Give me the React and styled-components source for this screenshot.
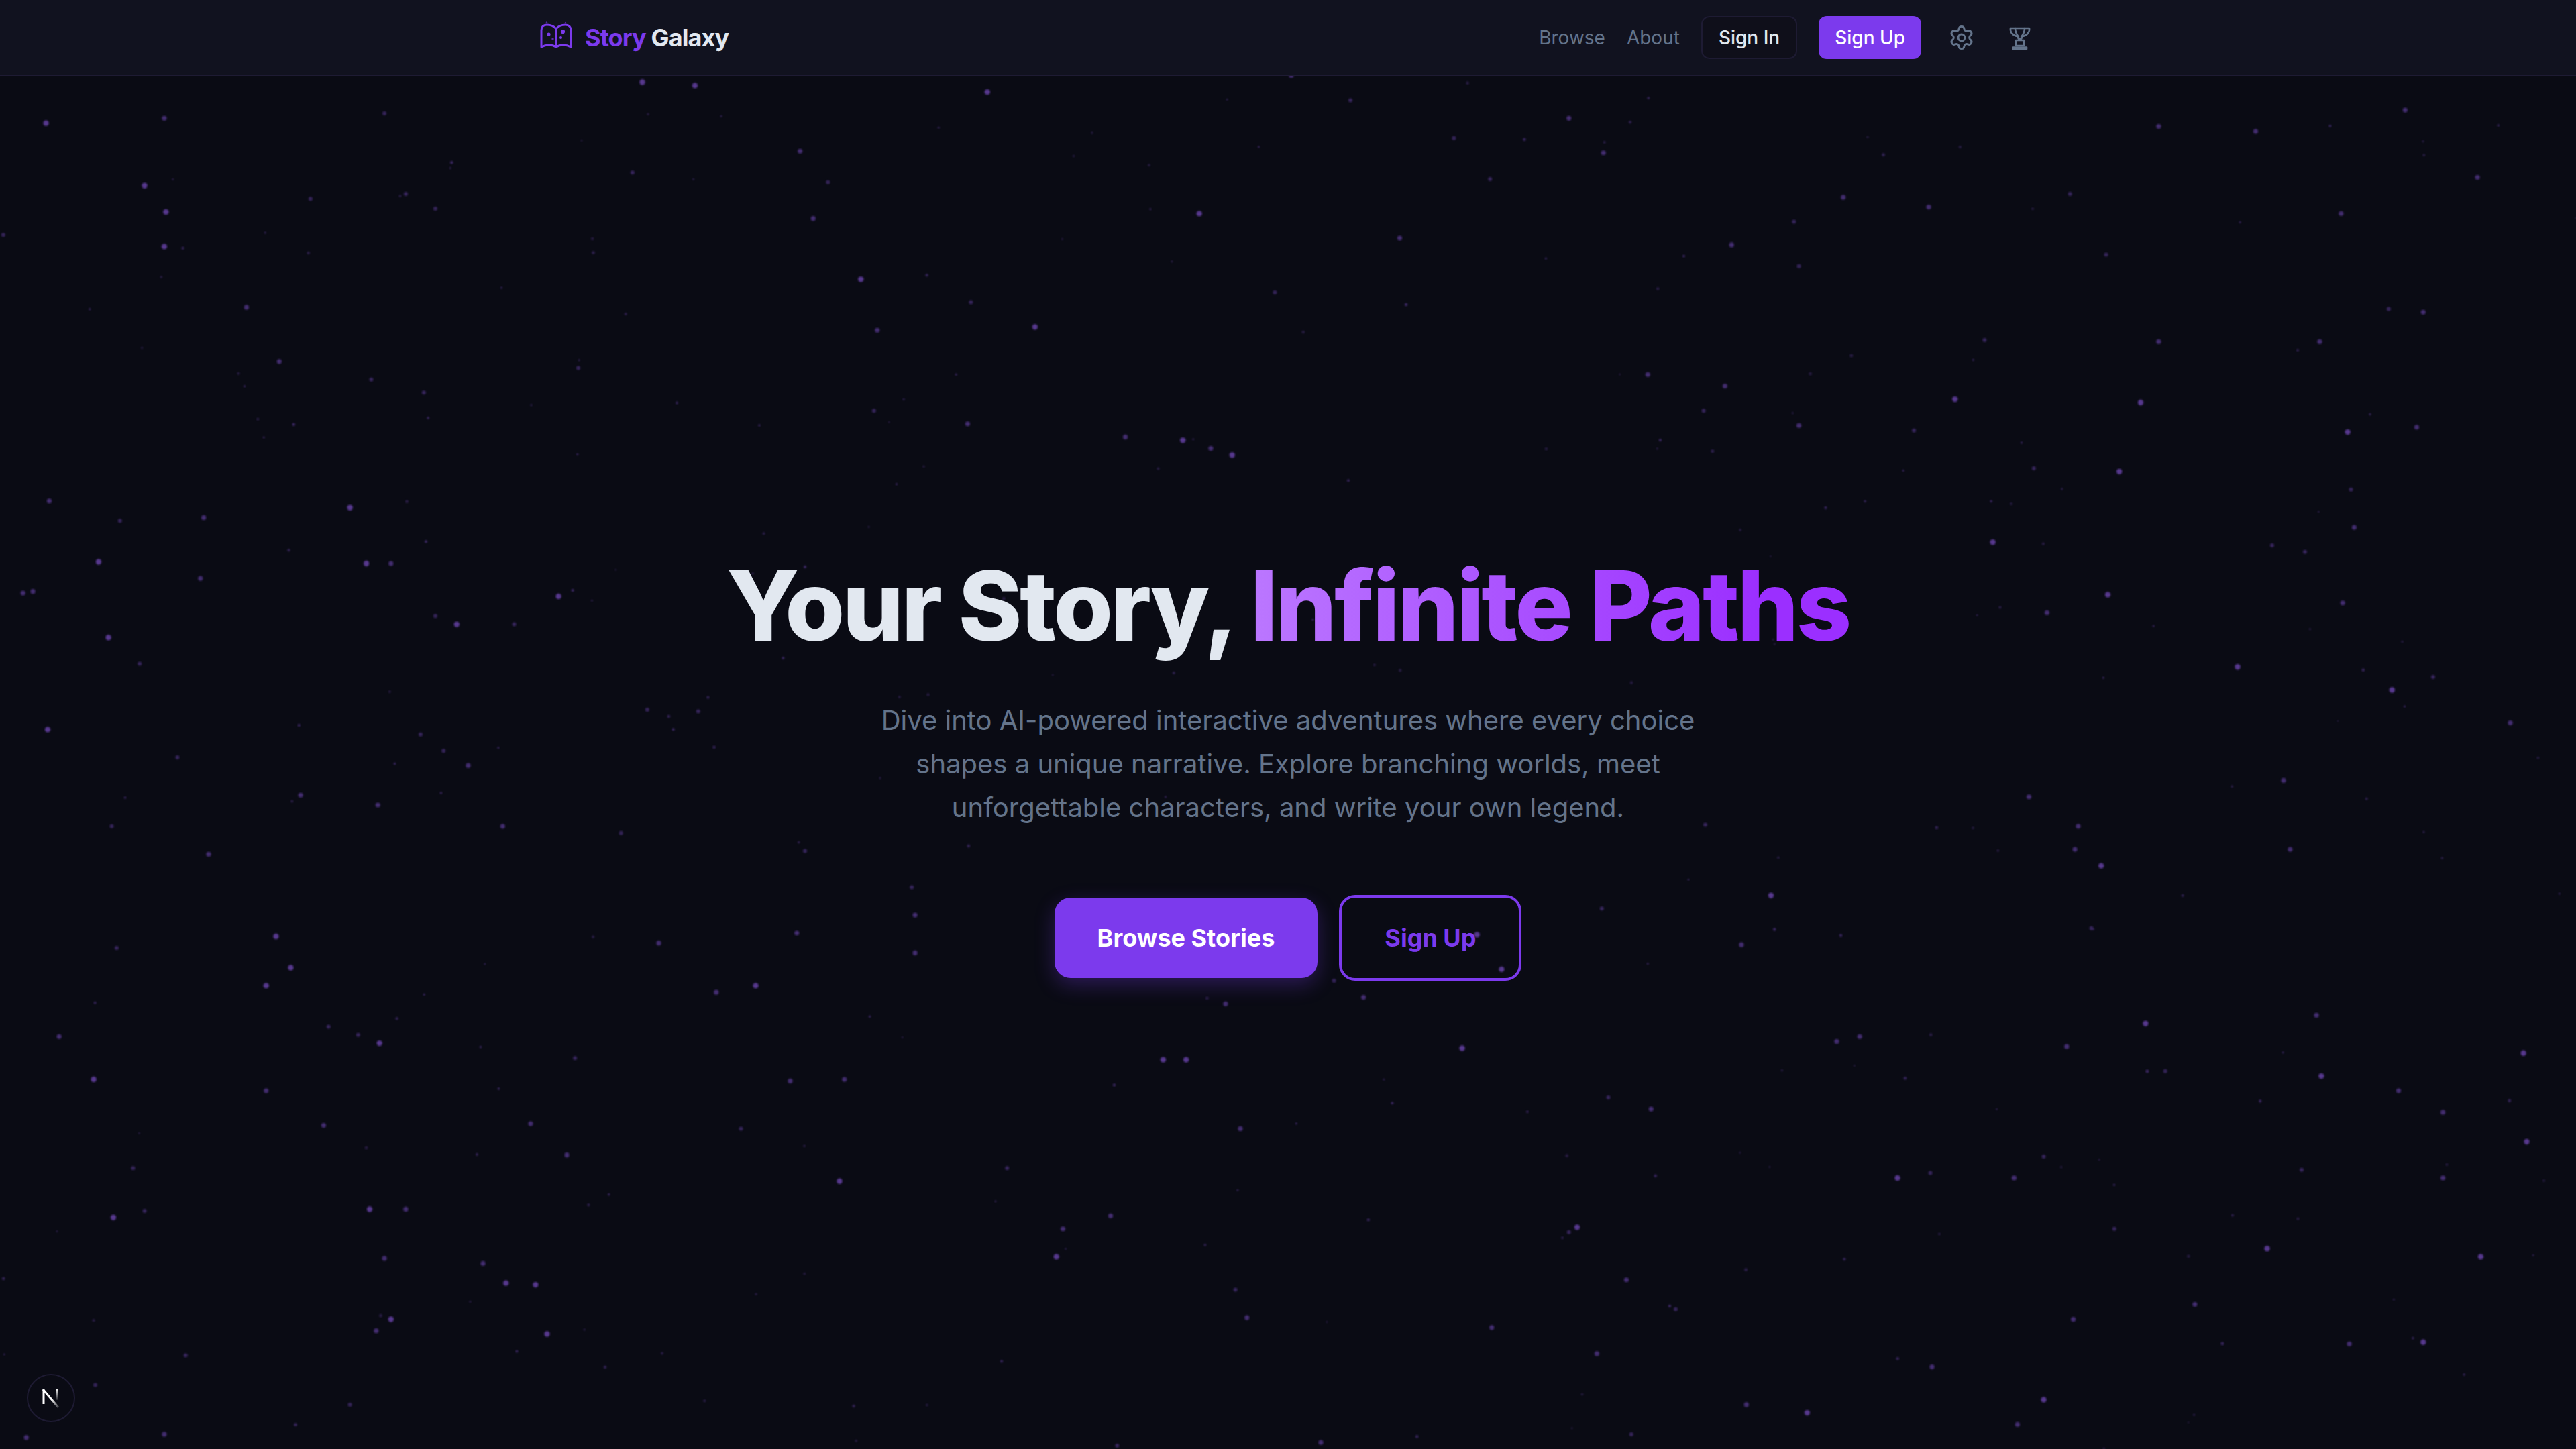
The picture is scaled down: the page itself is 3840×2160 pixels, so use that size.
import React from "react";
import styled, { createGlobalStyle } from "styled-components";
import { Settings } from "lucide-react";

const GlobalStyle = createGlobalStyle`
  html, body {
    margin: 0;
    padding: 0;
    background: #0a0b14;
  }
  * {
    box-sizing: border-box;
  }
`;

// star spots, read off the 1568 wide reference
const STAR_SPOTS = [
  [391,50],[423,52],[601,56],[786,46],[822,61],[885,84],[28,75],[234,69],[100,72],[487,92],[504,111],[495,133],[385,105],[88,113],[101,129],[189,121],[265,127],[2,143],[100,150],[247,118],[524,170],[591,184],[630,199],[150,187],[534,201],[352,224],[170,220],[226,231],[258,239],[1003,228],[1050,235],[1095,259],[1037,250],[1208,207],[1314,208],[1412,208],[1471,260],[1429,263],[1290,287],[1238,285],[1190,243],[1165,262],[1303,245],[1373,80],[1314,77],[1464,67],[1508,108],[1260,118],[1174,126],[1122,120],[1095,162],[1054,149],[976,93],[955,72],[852,145],[907,109],[776,178],[730,130],[1475,190],[1454,188],[1425,130],[1282,155],[1092,135],[685,266],[720,268],[737,273],[750,277],[589,258],[532,250],[30,305],[73,317],[213,309],[124,315],[60,342],[14,361],[20,360],[122,352],[223,343],[238,343],[340,363],[313,380],[265,375],[278,380],[66,388],[29,444],[85,404],[394,432],[425,433],[256,447],[270,457],[285,466],[108,461],[183,484],[230,490],[306,503],[378,507],[127,520],[68,503],[1213,330],[1431,298],[1433,321],[1403,336],[1283,362],[1426,367],[1383,332],[1246,373],[1362,406],[1456,420],[1481,412],[1528,440],[1390,475],[1265,503],[1263,517],[1279,527],[1394,517],[1273,565],[1235,485],[1078,545],[975,553],[1038,502],[1060,575],[168,570],[71,577],[177,589],[162,600],[200,625],[218,630],[231,635],[36,631],[57,657],[162,664],[197,685],[81,711],[69,741],[88,737],[225,736],[247,736],[234,766],[294,769],[308,781],[326,782],[333,812],[229,810],[238,803],[213,855],[113,825],[58,843],[100,873],[16,875],[350,644],[323,684],[345,703],[451,687],[481,658],[514,657],[511,719],[613,711],[755,687],[708,645],[722,645],[647,748],[643,765],[676,740],[752,785],[759,802],[908,808],[960,747],[955,750],[990,779],[1020,797],[972,824],[1155,717],[1244,704],[1226,717],[1175,714],[1118,634],[1132,631],[1258,637],[1306,623],[1318,652],[1410,618],[1413,655],[1460,664],[1487,677],[1536,641],[1487,717],[1538,695],[1401,712],[1380,760],[1287,748],[1262,803],[1336,794],[1430,818],[1475,817],[1510,765],[1244,852],[1228,867],[1176,832],[1100,860],[1063,855],[993,873],[804,878],[680,880],[557,557],[485,568],[401,574],[557,580],[555,540],[460,600],[436,604],[715,555],[746,611],[830,607],[890,638],[979,668],[1005,675],[490,518],[812,597],[899,569],[914,590],
];

const SCALE = 3840 / 1568;

// small seeded generator so the faint dust stays put between runs
function makeDust(count) {
  let seed = 4711;
  const next = () => {
    seed = (seed * 16807) % 2147483647;
    return seed / 2147483647;
  };
  const dust = [];
  for (let i = 0; i < count; i++) {
    dust.push({ x: next() * 3840, y: 116 + next() * 2044, r: 1.2 + next() * 1.3, o: 0.2 + next() * 0.2 });
  }
  return dust;
}

const BIG_STARS = STAR_SPOTS.map(([x, y], i) => {
  const h = (x * 7 + y * 13 + i) % 10;
  return {
    x: x * SCALE,
    y: y * SCALE,
    r: h < 3 ? 3 : h < 7 ? 3.6 : 4.2,
    o: h < 3 ? 0.35 : h < 7 ? 0.45 : 0.6,
  };
});
const STARS = [...BIG_STARS, ...makeDust(240)];

function StarField() {
  return (
    <StarSvg viewBox="0 0 3840 2160" aria-hidden="true">
      {STARS.map((star, i) => (
        <circle key={i} cx={star.x} cy={star.y} r={star.r} fill="#8a56e0" opacity={star.o} />
      ))}
    </StarSvg>
  );
}

function LogoIcon() {
  return (
    <LogoSvg width="48" height="44" viewBox="0 0 48 44" fill="none" stroke="#7c3aed" strokeWidth="3" strokeLinejoin="round" strokeLinecap="round">
      <path d="M2 38V13C2 8 5 5 10 5C16 5 21 7 24 11C27 7 32 5 38 5C43 5 46 8 46 13V38C39 34 30 34 24 38C18 34 9 34 2 38Z" />
      <path d="M24 11V38" />
      <g fill="#7c3aed" stroke="none">
        <circle cx="13" cy="19" r="2.6" />
        <circle cx="34" cy="15" r="3.1" />
        <circle cx="19" cy="26" r="1.7" fillOpacity="0.7" />
        <circle cx="31" cy="24" r="2" />
        <circle cx="10" cy="1.5" r="1.2" fillOpacity="0.6" />
        <circle cx="38" cy="2" r="1.2" fillOpacity="0.6" />
      </g>
    </LogoSvg>
  );
}

function TrophyIcon() {
  return (
    <svg width="36" height="36" viewBox="0 0 36 36" fill="none" stroke="currentColor" strokeWidth="2.6" strokeLinejoin="round" strokeLinecap="round">
      <path d="M4 4H32C33 10 28 15 22 16L20 20H16L14 16C8 15 3 10 4 4Z" />
      <path d="M11 4C11 9 13 13 16 17" />
      <path d="M25 4C25 9 23 13 20 17" />
      <path d="M12 22H24V30H12Z" />
      <path d="M8 32.5H28V35H8Z" />
    </svg>
  );
}

function NextMark() {
  return (
    <svg width="30" height="32" viewBox="0 0 30 32" fill="none">
      <defs>
        <linearGradient id="nextFadeA" x1="0" y1="0" x2="1" y2="1">
          <stop offset="0.55" stopColor="#fff" />
          <stop offset="1" stopColor="#fff" stopOpacity="0.2" />
        </linearGradient>
        <linearGradient id="nextFadeB" x1="0" y1="0" x2="0" y2="1">
          <stop offset="0" stopColor="#fff" />
          <stop offset="1" stopColor="#fff" stopOpacity="0.1" />
        </linearGradient>
      </defs>
      <path d="M4 3.5V25" stroke="#fff" strokeWidth="3" />
      <path d="M3 3L26 30" stroke="url(#nextFadeA)" strokeWidth="3" />
      <rect x="23" y="2" width="3" height="17" fill="url(#nextFadeB)" />
    </svg>
  );
}

export default function App() {
  return (
    <Page>
      <GlobalStyle />
      <StarField />
      <Header>
        <HeaderInner>
          <Logo>
            <LogoIcon />
            <LogoText>
              <span>Story</span> Galaxy
            </LogoText>
          </Logo>
          <Nav>
            <NavLink>Browse</NavLink>
            <NavLink>About</NavLink>
            <SignIn>Sign In</SignIn>
            <SignUpSmall>Sign Up</SignUpSmall>
            <IconSlot>
              <Settings size={40} strokeWidth={1.75} />
            </IconSlot>
            <IconSlot>
              <TrophyIcon />
            </IconSlot>
          </Nav>
        </HeaderInner>
      </Header>
      <Hero>
        <Title>
          Your Story, <TitleAccent>Infinite Paths</TitleAccent>
        </Title>
        <Lead>
          Dive into AI-powered interactive adventures where every choice shapes a unique narrative. Explore branching worlds, meet unforgettable characters, and write your own legend.
        </Lead>
        <Actions>
          <PrimaryAction>Browse Stories</PrimaryAction>
          <OutlineAction>Sign Up</OutlineAction>
        </Actions>
      </Hero>
      <DevBadge>
        <NextMark />
      </DevBadge>
    </Page>
  );
}

const Page = styled.div`
  position: relative;
  display: flex;
  flex-direction: column;
  width: 3840px;
  height: 2160px;
  overflow: hidden;
  background: #0a0b14;
  font-family: Inter, "Liberation Sans", sans-serif;
`;

const StarSvg = styled.svg`
  position: absolute;
  inset: 0;
  width: 3840px;
  height: 2160px;
  filter: blur(1px);
`;

const Header = styled.header`
  position: relative;
  height: 114px;
  flex: none;
  background: #11121f;
  border-bottom: 2px solid #1e1b33;
`;

const HeaderInner = styled.div`
  display: flex;
  align-items: center;
  justify-content: space-between;
  width: 2240px;
  height: 112px;
  margin: 0 auto;
  padding: 0 11px 0 5px;
`;

const Logo = styled.div`
  display: flex;
  align-items: center;
  gap: 19px;
`;

const LogoSvg = styled.svg`
  margin-top: -4px;
`;

const LogoText = styled.div`
  font-size: 36px;
  font-weight: 700;
  color: #e2e8f0;
  letter-spacing: -0.9px;

  & span {
    color: #7c3aed;
  }
`;

const Nav = styled.nav`
  display: flex;
  align-items: center;
`;

const NavLink = styled.a`
  font-size: 28px;
  color: #64748b;
  margin-right: 32px;
`;

const SignIn = styled.button`
  height: 64px;
  padding: 0 24px;
  margin-right: 32px;
  border: 2px solid #1e1b33;
  border-radius: 12px;
  background: #0f0f1a;
  color: #e2e8f0;
  font: 500 28px Inter, sans-serif;
`;

const SignUpSmall = styled.button`
  height: 64px;
  padding: 0 24px;
  margin-right: 40px;
  border: none;
  border-radius: 12px;
  background: #7c3aed;
  color: #fff;
  font: 500 28px Inter, sans-serif;
`;

const IconSlot = styled.span`
  display: flex;
  margin-right: 49px;
  color: #64748b;

  &:last-child {
    margin-right: 0;
  }
`;

const Hero = styled.main`
  position: relative;
  flex: 1;
  display: flex;
  flex-direction: column;
  align-items: center;
  justify-content: center;
  padding-top: 12px;
`;

const Title = styled.h1`
  margin: 0 0 58px;
  font-size: 144px;
  line-height: 1.1;
  font-weight: 800;
  letter-spacing: -3.6px;
  color: #e2e8f0;
`;

const TitleAccent = styled.span`
  background: linear-gradient(90deg, #bb77ff, #9b2fff 85%);
  background-clip: text;
  -webkit-background-clip: text;
  color: transparent;
`;

const Lead = styled.p`
  width: 1280px;
  margin: 0 0 98px;
  font-size: 40px;
  line-height: 65px;
  text-align: center;
  color: #64748b;
`;

const Actions = styled.div`
  display: flex;
  align-items: center;
  gap: 32px;
`;

const PrimaryAction = styled.button`
  height: 120px;
  padding: 0 64px;
  border: none;
  border-radius: 24px;
  background: #7c3aed;
  color: #fff;
  font: 700 36px Inter, sans-serif;
  box-shadow: 0 10px 30px rgba(124, 58, 237, 0.3);
`;

const OutlineAction = styled.button`
  height: 128px;
  padding: 0 64px;
  border: 4px solid #7c3aed;
  border-radius: 24px;
  background: transparent;
  color: #7c3aed;
  font: 700 36px Inter, sans-serif;
`;

const DevBadge = styled.div`
  position: absolute;
  left: 40px;
  bottom: 40px;
  display: flex;
  align-items: center;
  justify-content: center;
  width: 72px;
  height: 72px;
  border: 2px solid #1e1b33;
  border-radius: 50%;
  background: #0a0b14;
`;
